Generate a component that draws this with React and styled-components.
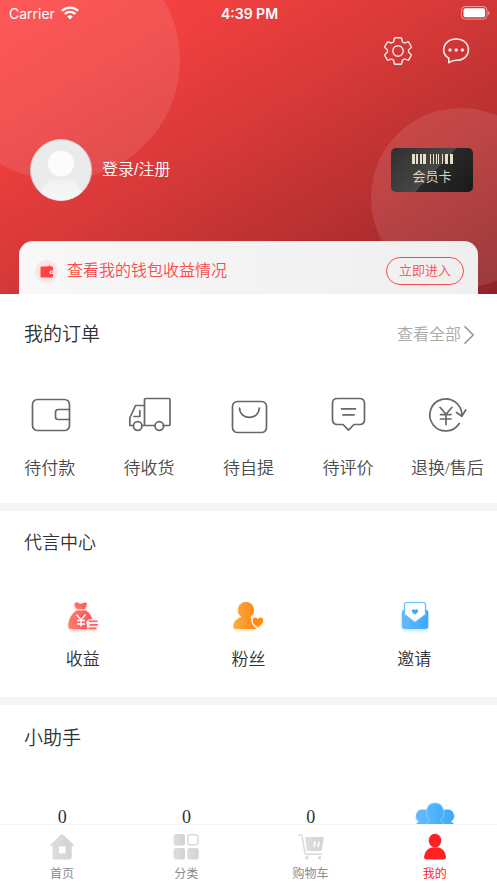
import React from "react";
import styled, { createGlobalStyle } from "styled-components";

const GlobalStyle = createGlobalStyle`
  * { box-sizing: border-box; }
  body {
    margin: 0;
    background: #fff;
    font-family: "Liberation Serif", "Noto Sans CJK SC", sans-serif;
    font-weight: 350;
    color: #303133;
  }
  button {
    margin: 0;
    padding: 0;
    border: 0;
    background: none;
    font: inherit;
    color: inherit;
    cursor: pointer;
  }
  a { color: inherit; text-decoration: none; }
  svg { display: block; }
`;

const Screen = styled.div`
  display: flex;
  flex-direction: column;
  height: 100vh;
`;

const Content = styled.main`
  flex: 1;
  min-height: 0;
  overflow-y: auto;
  scrollbar-width: none;
`;

const Hero = styled.header`
  position: relative;
  overflow: hidden;
  display: flex;
  flex-direction: column;
  color: #fff;
  background: linear-gradient(149deg, #ff4545 0%, #ee3f3f 25%, #d93939 45%, #bd3232 67%, #8e2427 100%);

  &::before,
  &::after {
    content: "";
    position: absolute;
    border-radius: 50%;
    background: rgba(255, 255, 255, 0.1);
  }
  &::before {
    left: -60px;
    top: -60px;
    width: 240px;
    height: 240px;
  }
  &::after {
    right: -54px;
    top: 108px;
    width: 180px;
    height: 180px;
  }
  > * {
    position: relative;
    z-index: 1;
  }
`;

const StatusBar = styled.div`
  display: grid;
  grid-template-columns: 1fr auto 1fr;
  align-items: center;
  height: 26px;
  padding: 0 7px 0 9px;
  font-family: Inter, "Liberation Sans", sans-serif;
  font-size: 14px;
  font-weight: 400;
`;

const Carrier = styled.span`
  display: flex;
  align-items: center;
  gap: 6px;
`;

const Clock = styled.time`
  font-weight: 600;
`;

const Battery = styled.span`
  justify-self: end;
`;

const Actions = styled.div`
  display: flex;
  justify-content: flex-end;
  gap: 28px;
  padding: 10px 26px 0;

  svg {
    width: 30px;
    height: 30px;
  }
`;

const Profile = styled.div`
  display: flex;
  align-items: center;
  padding: 73px 24px 0 30px;
`;

const Avatar = styled.span`
  width: 62px;
  height: 62px;
`;

const LoginLink = styled.a`
  margin: 0 auto 0 10px;
  font-family: "Liberation Sans", "Noto Sans CJK SC", sans-serif;
  font-size: 16px;
  line-height: 24px;
`;

const MemberCard = styled.button`
  display: flex;
  flex-direction: column;
  align-items: center;
  justify-content: center;
  gap: 4px;
  width: 82px;
  height: 44px;
  border-radius: 5px;
  background: linear-gradient(133deg, #303030 0%, #474747 53%, #292929 53%, #191919 100%);
  font-size: 13px;
  line-height: 18px;
  font-weight: 400;
  color: #ddd2b4;
`;

const WalletBanner = styled.div`
  display: flex;
  align-items: center;
  height: 53px;
  margin: 40px 19px 0;
  padding: 6px 14px 0 16px;
  border-radius: 14px 14px 0 0;
  border-top: 1px solid #fbe3e3;
  background: linear-gradient(90deg, #f8f8f8, #efefef);
  color: #f94b4b;
`;

const WalletText = styled.span`
  margin: 0 auto 0 9px;
  font-size: 16px;
  line-height: 24px;
`;

const EnterButton = styled.button`
  width: 78px;
  height: 28px;
  border: 1px solid #f94b4b;
  border-radius: 14px;
  font-size: 13px;
  line-height: 18px;
`;

const Section = styled.section`
  padding-bottom: ${(p) => p.$bottom}px;
  border-bottom: 8px solid #f5f5f5;
`;

const SectionHead = styled.div`
  display: flex;
  align-items: center;
  justify-content: space-between;
  height: ${(p) => p.$height}px;
  padding: 4px 22px 0 24px;
`;

const Title = styled.h2`
  margin: 0;
  font-size: ${(p) => p.$size}px;
  line-height: 28px;
  font-weight: inherit;
`;

const MoreLink = styled.a`
  display: flex;
  align-items: center;
  gap: 2px;
  font-size: 16px;
  line-height: 24px;
  color: #a9a9a9;
`;

const EntryGrid = styled.nav`
  display: grid;
  grid-template-columns: repeat(${(p) => p.$columns}, 1fr);
  padding-top: ${(p) => p.$top}px;
`;

const Entry = styled.a`
  display: flex;
  flex-direction: column;
  align-items: center;
  gap: ${(p) => p.$gap}px;
  font-size: 17px;
  line-height: 26px;
  white-space: nowrap;
  color: ${(p) => p.$color};
`;

const StatGrid = styled.div`
  display: grid;
  grid-template-columns: repeat(4, 1fr);
  justify-items: center;
  padding-top: 32px;
`;

const Stat = styled.span`
  padding-top: 7px;
  font-size: 18px;
  line-height: 18px;
`;

const TabBar = styled.nav`
  display: grid;
  grid-template-columns: repeat(4, 1fr);
  height: 59px;
  border-top: 1px solid #f4f4f4;
  background: #fff;
`;

const Tab = styled.a`
  display: flex;
  flex-direction: column;
  align-items: center;
  padding-top: 7px;
  gap: 3px;
  font-size: 12px;
  line-height: 18px;
  font-weight: 400;
  color: ${(p) => (p.$active ? "#ff2222" : "#8c8c8c")};
`;

const WifiIcon = () => (
  <svg width="18" height="14" viewBox="0 0 18 14" fill="none" stroke="#fff" strokeWidth="2.4">
    <path d="M.9 4.9a11.6 11.6 0 0 1 16.2 0M3.8 8a7.4 7.4 0 0 1 10.4 0" />
    <path d="M6.200 10.600a4 4 0 0 1 5.600 0L9 13.500Z" fill="#fff" stroke="none" />
  </svg>
);

const BatteryIcon = () => (
  <svg width="29" height="14" viewBox="0 0 29 14">
    <rect x=".5" y=".5" width="25.5" height="12.6" rx="3.8" fill="none" stroke="#fff" strokeOpacity=".5" />
    <rect x="2.5" y="2.3" width="21.6" height="9" rx="2" fill="#fff" />
    <path d="M27.2 5v4c1.7-.6 1.7-3.400 0-4Z" fill="#fff" fillOpacity=".6" />
  </svg>
);

const GearIcon = () => (
  <svg viewBox="0 0 30 30" fill="none" stroke="#ffe9e9" strokeWidth="1.4" strokeLinejoin="round">
    <path d="M12.300 1.700h5.400q.8 0 1 .8l.5 2.600q.2.800.9 1.200l.8.400q.7.400 1.400.1l2.300-.9q.8-.300 1.200.4l2.400 4.200q.4.800-.3 1.300l-1.700 1.400q-.7.500-.7 1.300v1q0 .8.700 1.300l1.700 1.400q.7.500.3 1.300l-2.400 4.200q-.4.700-1.200.4l-2.300-.9q-.7-.3-1.400.1l-.8.4q-.7.400-.9 1.200l-.5 2.600q-.2.800-1 .8h-5.400q-.8 0-1-.8l-.5-2.600q-.2-.8-.9-1.200l-.8-.4q-.7-.4-1.400-.1l-2.300.9q-.8.300-1.200-.4l-2.400-4.200q-.4-.8.3-1.300l1.700-1.400q.7-.5.7-1.300v-1q0-.8-.7-1.300l-1.700-1.400q-.7-.5-.3-1.300l2.400-4.200q.4-.7 1.200-.4l2.300.9q.7.300 1.400-.1l.8-.4q.7-.4.9-1.200l.5-2.600q.2-.8 1-.8Z" />
    <circle cx="15" cy="15" r="5.200" />
  </svg>
);

const ChatIcon = () => (
  <svg viewBox="0 0 30 30" fill="none" stroke="#ffe9e9" strokeWidth="1.600" strokeLinejoin="round">
    <path d="M7.800 26.700V22.300C4.400 20.300 2.700 17.400 2.700 14 2.700 7.500 8 3 15.200 3s12.200 4.500 12.200 10.700-5 10.600-12.200 10.600q-4 0-7.400 2.400Z" />
    <g fill="#ffe9e9" stroke="none">
      <circle cx="9" cy="14" r="1.700" />
      <circle cx="15.200" cy="14" r="1.700" />
      <circle cx="21.400" cy="14" r="1.700" />
    </g>
  </svg>
);

const AvatarIcon = () => (
  <svg width="62" height="62" viewBox="0 0 62 62">
    <defs>
      <clipPath id="avatarClip"><circle cx="31" cy="31" r="30.500" /></clipPath>
      <linearGradient id="avatarBody" x2="0" y2="1">
        <stop stopColor="#f1f1f1" />
        <stop offset="1" stopColor="#f8f8f8" />
      </linearGradient>
    </defs>
    <circle cx="31" cy="31" r="30.500" fill="#ebebeb" stroke="#d9c6c6" />
    <g clipPath="url(#avatarClip)">
      <path d="M9 62c2-14 8-21.500 16-21.500h12c8 0 15 7.500 17 21.500Z" fill="url(#avatarBody)" />
      <circle cx="31" cy="24.500" r="13" fill="#fcfcfc" />
    </g>
  </svg>
);

const BarcodeIcon = () => (
  <svg width="41" height="10" viewBox="0 0 41 10" fill="#eadfc4">
    <path d="M0 0h3v10H0zM4 0h2v10H4zM8 0h2v10H8zM11 0h3v10h-3zM18 0h1v10h-1zM21 0h1v10h-1zM24 0h1v10h-1zM26 0h1v10h-1zM30 0h1v10h-1zM33 0h3v10h-3zM38 0h3v10h-3z" />
  </svg>
);

const WalletBadgeIcon = () => (
  <svg width="23" height="23" viewBox="0 0 23 23">
    <circle cx="11.500" cy="11.500" r="11.500" fill="#fbe5e5" />
    <path d="M10.500 7 15 5.200l1 1.800Z" fill="#f77" />
    <path d="M6.500 6.500h10.500q1 0 1 1v3h-2a1.700 1.700 0 0 0 0 3.400h2v2.600q0 1-1 1H6.500q-1 0-1-1v-9q0-1 1-1Z" fill="#ff4242" />
    <circle cx="16.600" cy="12.200" r=".8" fill="#ff4242" />
  </svg>
);

const ChevronIcon = () => (
  <svg width="12" height="20" viewBox="0 0 12 20" fill="none" stroke="#929292" strokeWidth="1.500">
    <path d="m1.500 1.300 8.700 8.700-8.700 8.700" />
  </svg>
);

const LineSvg = ({ children }) => (
  <svg width="44" height="40" viewBox="0 0 44 40" fill="none" stroke="#686868" strokeWidth="1.700" strokeLinecap="round" strokeLinejoin="round">
    {children}
  </svg>
);

const PayIcon = () => (
  <LineSvg>
    <rect x="4.500" y="5.500" width="37" height="31" rx="5" />
    <path d="M41.500 15.500H30.200q-2.700 0-2.700 2.700v4.600q0 2.700 2.700 2.700h11.300" />
  </LineSvg>
);

const TruckIcon = () => (
  <LineSvg>
    <path d="M6.500 31.500H2.800V24L8.500 11.500h9M14.500 31.500h13.500M36 31.500h6q1 0 1-1V5.500q0-1-1-1H18.500q-1 0-1 1v26M12.800 16.500v6H7" />
    <circle cx="10.700" cy="32" r="4.300" />
    <circle cx="32.300" cy="32" r="4.300" />
  </LineSvg>
);

const BagIcon = () => (
  <LineSvg>
    <rect x="6.500" y="7.500" width="34" height="31" rx="5" />
    <path d="M13.500 14c.4 12.500 19.300 12.500 19.800 0" />
  </LineSvg>
);

const ReviewIcon = () => (
  <LineSvg>
    <path d="M11.500 4.500h22q5 0 5 5v16q0 5-5 5H28l-5.500 5.700-5.500-5.700h-5.500q-5 0-5-5v-16q0-5 5-5ZM15.500 14.800h14M17 20.900h11" />
  </LineSvg>
);

const RefundIcon = () => (
  <LineSvg>
    <path d="M34.300 29.500A16 16 0 1 1 36.800 21.500M31.500 18.500l5.300 3.800 3.900-6.300M15 13.300l6 7 6-7M15.500 20.600h10.500M15.500 25h10.500M21 20.600v10" />
  </LineSvg>
);

const ColorIcon = styled.svg`
  width: 36px;
  height: 36px;
  overflow: visible;
`;

const ColorSvg = ({ id, from, to, glow, children }) => (
  <ColorIcon viewBox="0 0 36 36">
    <defs>
      <linearGradient id={id}>
        <stop stopColor={from} />
        <stop offset="1" stopColor={to} />
      </linearGradient>
      <filter id={`${id}Glow`} x="-30%" y="-30%" width="160%" height="180%">
        <feDropShadow dx="0" dy="2" stdDeviation="1.800" floodColor={glow} floodOpacity=".4" />
      </filter>
    </defs>
    <g filter={`url(#${id}Glow)`} fill={`url(#${id})`}>{children}</g>
  </ColorIcon>
);

const IncomeIcon = () => (
  <ColorSvg id="income" from="#ff7c70" to="#fb5359" glow="#ff7770">
    <path d="M9.500 4.500q1.800-2 4-.5 2.500 1.500 4.500 0 3-1.500 4 .8-.5 3.200-2.800 5.200h-6.500Q9 8 9.500 4.500ZM11.500 11.500h9.500q5 3.500 6 8.500H24q-4 2.500-2.500 5l1 5H6.500q-3.200 0-3.200-3.500Q4 16 11.500 11.500Z" />
    <path d="M11.500 15.500l4.500 5.500 4.500-5.500M12 21.500h8M12 25h8M16 21v6.500" fill="none" stroke="#fff" strokeWidth="1.300" />
    <path d="M24 21.400h8.500v1.700H24zM24.500 25h8.500v1.700h-8.500zM23.500 28.600h8v1.700h-8z" fill="#ff6265" />
  </ColorSvg>
);

const FansIcon = () => (
  <ColorSvg id="fans" from="#f9ae43" to="#ff8716" glow="#ffc16b">
    <path d="M16 3a8 8 0 0 1 4.700 14.500Q20 18 21 18.800Q21 26 26 29.500 25.500 30 24.500 30H6.500Q3.200 30 3.200 27 4 20.500 11.300 18v-.5A8 8 0 0 1 16 3Z" />
    <path d="M27.800 28.200q-5.200-3.500-5.200-6.800 0-3 2.600-3 1.700 0 2.600 1.600 1-1.600 2.700-1.600 2.600 0 2.600 3 0 3.300-5.300 6.800Z" fill="#ff8a17" />
  </ColorSvg>
);

const InviteIcon = () => (
  <ColorSvg id="invite" from="#66baff" to="#3ea8f7" glow="#80c5ff">
    <path d="M8.500 10.500h21q2.800.5 2.800 3V27q0 3-3 3h-20.500q-3 0-3-3V13.500q0-2.500 2.700-3Z" />
    <path d="M11 3.500h16q2.500 0 2.500 2.500v9.500L19 23.500 8.500 15.500V6q0-2.500 2.500-2.500Z" fill="#fff" stroke="#65bcfb" strokeWidth="1.200" />
    <path d="M19 15.500q-4-2.300-3-4.500 1.700-1.600 3 0 1.400-1.600 3 0 1 2.200-3 4.500Z" fill="#3ca8f8" />
  </ColorSvg>
);

const TeamIcon = () => (
  <ColorSvg id="team" from="#62baff" to="#3da9f8" glow="#80c5ff">
    <path d="M6 8.500a6.500 6.500 0 0 1 6 10v15H-1v-9.500q0-2 3-3.500a6.500 6.500 0 0 1 4-12ZM30 8.500a6.500 6.500 0 0 0-6 10v15h13v-9.500q0-2-3-3.500a6.500 6.500 0 0 0-4-12Z" />
    <path d="M18 2a8.500 9.500 0 0 1 5.500 17q0 2 7 5.500v9h-25v-9q7-3.500 7-5.500A8.500 9.500 0 0 1 18 2Z" stroke="#94d1ff" strokeWidth=".8" />
  </ColorSvg>
);

const TabSvg = ({ children }) => (
  <svg width="30" height="30" viewBox="0 0 30 30" fill="url(#tabGray)">
    <defs>
      <linearGradient id="tabGray">
        <stop stopColor="#dedede" />
        <stop offset="1" stopColor="#d2d2d2" />
      </linearGradient>
    </defs>
    {children}
  </svg>
);

const HomeIcon = () => (
  <TabSvg>
    <path fillRule="evenodd" d="M13.800 2.700q1.200-1 2.400 0l11.500 11h-3V25q0 2.500-2.500 2.500H8Q5.500 27.500 5.500 25V13.700h-3ZM12.500 14.500q-.5 0-.5.500v6q0 .5.500.5h5.500q.5 0 .5-.5v-6q0-.5-.5-.5Z" />
  </TabSvg>
);

const CategoryIcon = () => (
  <TabSvg>
    <rect x="2.500" y="2" width="11.500" height="11.500" rx="2.500" />
    <rect x="2.500" y="16" width="11.500" height="11.500" rx="2.500" />
    <rect x="16.200" y="16" width="11.500" height="11.500" rx="2.500" />
    <rect x="16.900" y="2.700" width="10" height="10" rx="2" fill="none" stroke="#dadada" strokeWidth="1.500" />
  </TabSvg>
);

const CartIcon = () => (
  <TabSvg>
    <path d="M2.500 2.900h2.300q1 0 1.200 1L9 21q.2 1.200 1.500 1.200h15" fill="none" stroke="#d9d9d9" strokeWidth="1.500" strokeLinecap="round" />
    <path d="M9 5h17.500q1.200 0 1.200 1.500l-2 11q-.3 1.500-1.700 1.500H11Z" />
    <path d="m19 10-.8 4.500M23 10l-.8 4.500" stroke="#fff" strokeWidth="1.600" strokeLinecap="round" />
    <circle cx="10.800" cy="25.700" r="1.700" />
    <circle cx="23.500" cy="25.700" r="1.700" />
  </TabSvg>
);

const MineIcon = () => (
  <svg width="30" height="30" viewBox="0 0 30 30" fill="#ff2222">
    <ellipse cx="15" cy="8.600" rx="6.300" ry="6.800" />
    <path d="M11.500 15.500h7.500q6 2 7 9 0 3-2.500 3H6.500q-2.500 0-2.500-3 1.200-7 7.500-9Z" />
  </svg>
);

const orders = [
  ["待付款", PayIcon],
  ["待收货", TruckIcon],
  ["待自提", BagIcon],
  ["待评价", ReviewIcon],
  ["退换/售后", RefundIcon],
];

const promotions = [
  ["收益", IncomeIcon],
  ["粉丝", FansIcon],
  ["邀请", InviteIcon],
];

const tabs = [
  ["首页", HomeIcon],
  ["分类", CategoryIcon],
  ["购物车", CartIcon],
  ["我的", MineIcon],
];

export default function App() {
  return (
    <Screen>
      <GlobalStyle />
      <Content>
        <Hero>
          <StatusBar>
            <Carrier>Carrier <WifiIcon /></Carrier>
            <Clock>4:39 PM</Clock>
            <Battery><BatteryIcon /></Battery>
          </StatusBar>
          <Actions>
            <button type="button" aria-label="设置"><GearIcon /></button>
            <button type="button" aria-label="消息"><ChatIcon /></button>
          </Actions>
          <Profile>
            <Avatar><AvatarIcon /></Avatar>
            <LoginLink href="#login">登录/注册</LoginLink>
            <MemberCard type="button"><BarcodeIcon />会员卡</MemberCard>
          </Profile>
          <WalletBanner>
            <WalletBadgeIcon />
            <WalletText>查看我的钱包收益情况</WalletText>
            <EnterButton type="button">立即进入</EnterButton>
          </WalletBanner>
        </Hero>

        <Section $bottom={21}>
          <SectionHead $height={78}>
            <Title $size={19}>我的订单</Title>
            <MoreLink href="#orders">查看全部<ChevronIcon /></MoreLink>
          </SectionHead>
          <EntryGrid $columns={5} $top={22}>
            {orders.map(([label, Icon]) => (
              <Entry key={label} href="#orders" $gap={22} $color="#4a4a4a"><Icon />{label}</Entry>
            ))}
          </EntryGrid>
        </Section>

        <Section $bottom={24}>
          <SectionHead $height={60}>
            <Title $size={18}>代言中心</Title>
          </SectionHead>
          <EntryGrid $columns={3} $top={28}>
            {promotions.map(([label, Icon]) => (
              <Entry key={label} href="#promotions" $gap={12} $color="#303133"><Icon />{label}</Entry>
            ))}
          </EntryGrid>
        </Section>

        <Section $bottom={40}>
          <SectionHead $height={64}>
            <Title $size={19}>小助手</Title>
          </SectionHead>
          <StatGrid>
            <Stat>0</Stat>
            <Stat>0</Stat>
            <Stat>0</Stat>
            <TeamIcon />
          </StatGrid>
        </Section>
      </Content>
      <TabBar>
        {tabs.map(([label, Icon]) => (
          <Tab key={label} href="#tab" $active={label === "我的"}><Icon />{label}</Tab>
        ))}
      </TabBar>
    </Screen>
  );
}
